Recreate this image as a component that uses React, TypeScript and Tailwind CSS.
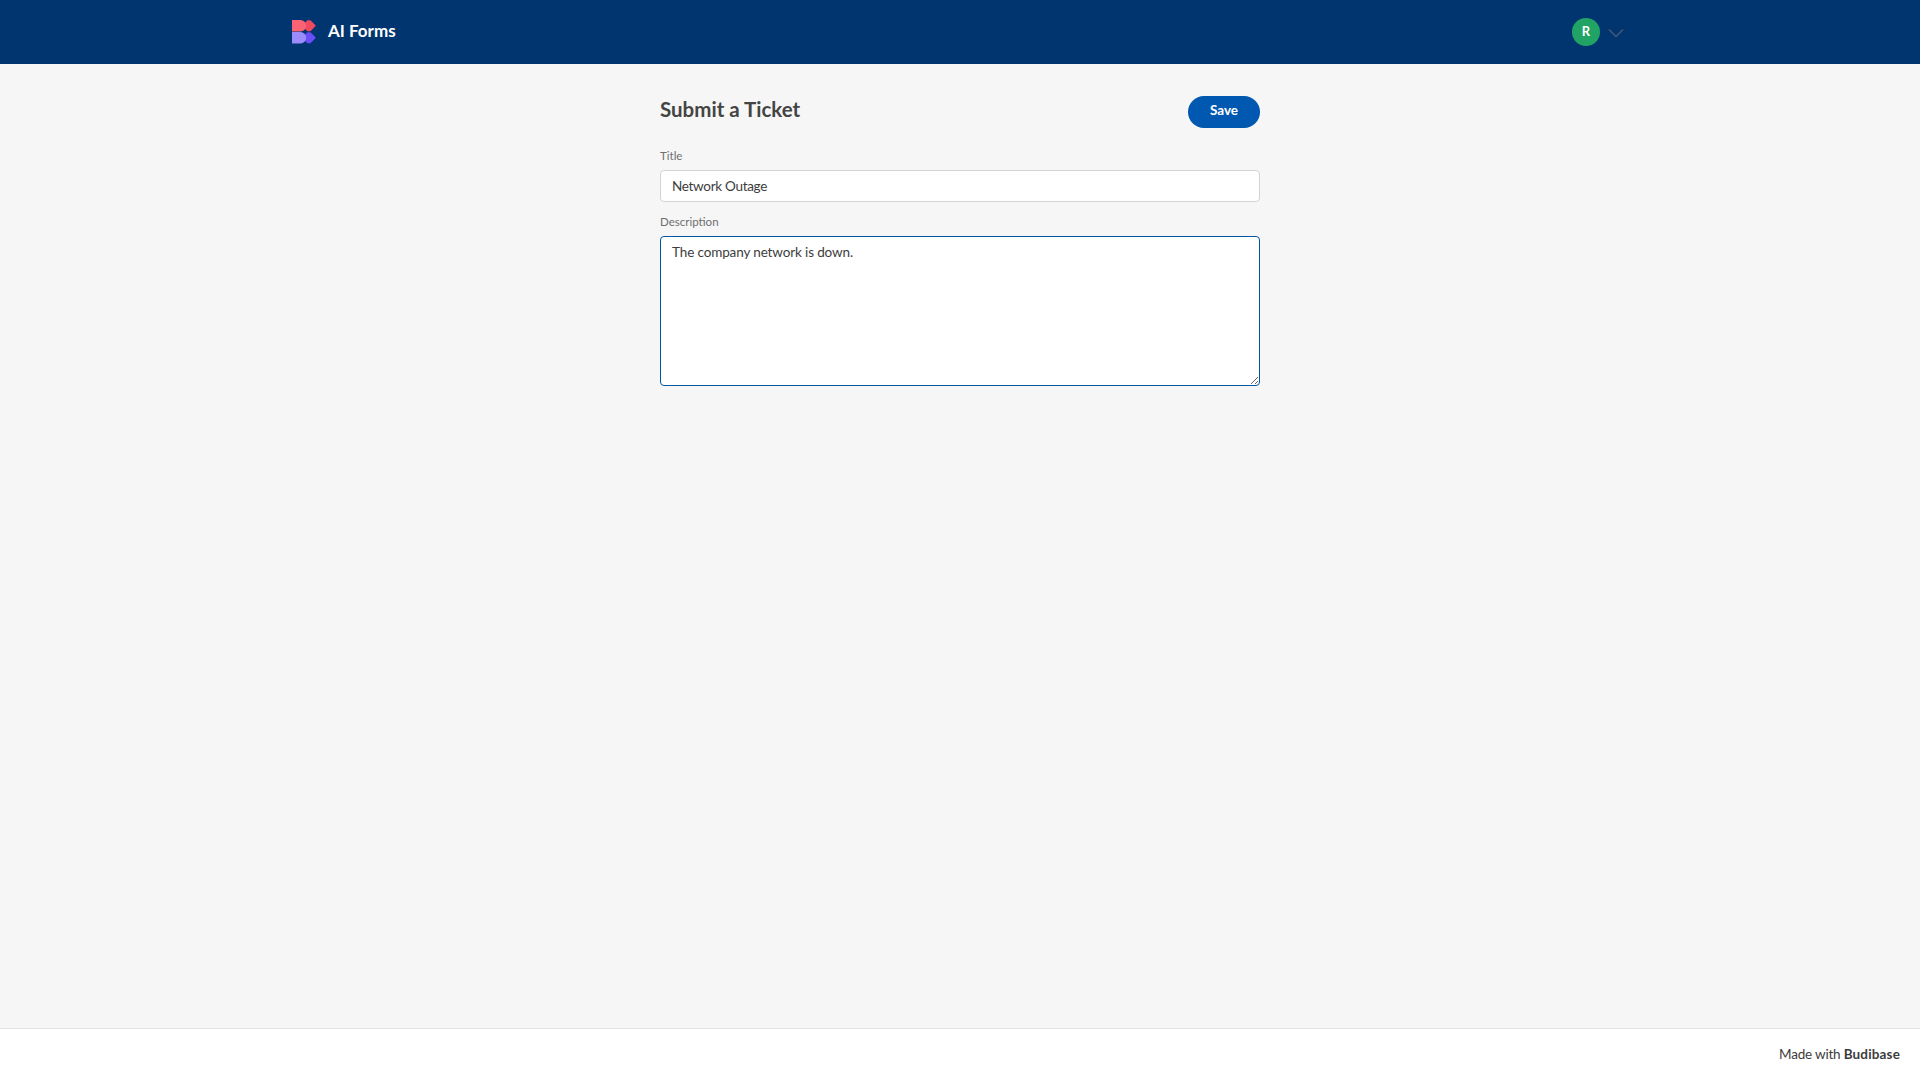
function BudibaseLogo() {
  return (
    <svg width="26" height="26" viewBox="0 0 26 26" className="shrink-0">
      <path d="M13 6.750 16.500 2.250h2.500l4.500 4.500-4.500 4.500h-2.500z" fill="#f04a5e" stroke="#f04a5e" strokeWidth="2" strokeLinejoin="round" />
      <path d="M1 1h8.500a5.750 5.750 0 0 1 0 11.500H1z" fill="#fb6274" />
      <path d="M13 18.750 16.500 14.250h2.500l4.500 4.500-4.500 4.500h-2.500z" fill="#6b4ef6" stroke="#6b4ef6" strokeWidth="2" strokeLinejoin="round" />
      <path d="M1 13h8.500a5.750 5.750 0 0 1 0 11.500H1z" fill="#9b8cfb" />
    </svg>
  );
}

export default function App() {
  return (
    <div className="flex h-screen flex-col bg-[#f6f6f6] font-['Lato','Noto_Sans',sans-serif] text-[#3f3f3f]">
      <header className="h-[64px] shrink-0 bg-[#003570]">
        <div className="mx-auto flex h-full w-[1400px] items-center justify-between px-[31px]">
          <div className="flex items-center gap-[11px]">
            <BudibaseLogo />
            <span className="-mt-[2px] text-[17px] font-bold text-white">AI Forms</span>
          </div>
          <div className="flex items-center gap-[8px] pr-[5px]">
            <div className="flex h-7 w-7 items-center justify-center rounded-full bg-[#21a366] text-[13px] font-bold text-white">
              R
            </div>
            <svg width="16" height="10" viewBox="0 0 16 10" fill="none" stroke="#4a5870" strokeWidth="1.500" className="mt-[2px]">
              <path d="M1 1.500 8 8.500l7-7" />
            </svg>
          </div>
        </div>
      </header>

      <main className="flex-1">
        <div className="mx-auto w-[600px] pt-[32px]">
          <div className="flex items-start justify-between">
            <h1 className="-mt-[3px] text-[20.500px] font-bold leading-[32px] text-[#444444]">Submit a Ticket</h1>
            <button className="h-8 w-[72px] rounded-full bg-[#0058b0] pb-[3px] text-[13.500px] font-bold text-white">Save</button>
          </div>

          <div className="mt-[21px]">
            <label className="block text-[11.500px] leading-[14px] text-[#6e6e6e]">Title</label>
            <input
              readOnly
              value="Network Outage"
              className="mt-[7px] h-8 w-full rounded-[4px] border border-[#d4d4d4] bg-white px-[11px] pb-[1px] text-[13.500px] tracking-[-0.3px] text-[#3c3c3c] outline-none"
            />
          </div>

          <div className="mt-[13px]">
            <label className="block text-[11.500px] leading-[14px] text-[#6e6e6e]">Description</label>
            <textarea
              readOnly
              value="The company network is down."
              className="mt-[7px] block h-[150px] w-full rounded-[4px] border border-[#00579e] bg-white px-[11px] py-[5px] text-[13.500px] leading-[21px] tracking-[-0.13px] text-[#3c3c3c] outline-none"
            />
          </div>
        </div>
      </main>

      <footer className="flex h-[52px] shrink-0 items-center justify-end border-t border-[#e2e2e2] bg-white pr-[20px] text-[13.500px] tracking-[-0.2px] text-[#3c3c3c]">
        Made with&nbsp;<span className="font-bold tracking-[0.15px]">Budibase</span>
      </footer>
    </div>
  );
}
